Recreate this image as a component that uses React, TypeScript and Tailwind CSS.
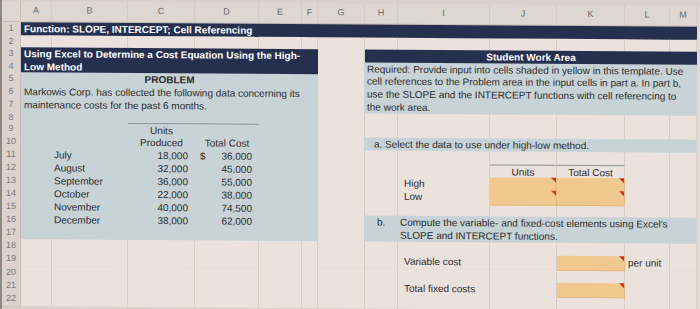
import React from 'react';

// column template: row header, A..M, trailing edge
const GRID =
  'grid grid-cols-[19px_31px_76px_67px_64px_43px_16px_47px_33px_92px_67px_68px_45px_27px_5px]';
const line = 'border-r border-b border-[#d9cdc8]';
const blank = `bg-[#ebe1dd] ${line}`;
const blue = 'bg-[#c8d3d7]';
const navy = 'bg-[#25304f] text-white font-bold text-[10px] leading-[13px] whitespace-nowrap';
const txt = 'text-[10px] leading-[13px] text-[#2b2b2b] whitespace-nowrap';

function Blank({ count = 1 }: { count?: number }) {
  return (
    <>
      {Array.from({ length: count }).map((_, i) => (
        <div key={i} className={blank} />
      ))}
    </>
  );
}

function Blue({ count = 1 }: { count?: number }) {
  return (
    <>
      {Array.from({ length: count }).map((_, i) => (
        <div key={i} className={blue} />
      ))}
    </>
  );
}

function Yellow() {
  return (
    <div className="relative bg-[#f1c990] border-r border-b border-[#e3b97f]">
      <span className="absolute right-0 top-0 w-0 h-0 border-l-[5px] border-l-transparent border-t-[5px] border-t-[#c23a26]" />
    </div>
  );
}

function Row({ n, h = 'h-[13px]', children }: { n: number; h?: string; children?: React.ReactNode }) {
  return (
    <div className={`${GRID} ${h}`}>
      <div className="flex items-center justify-center bg-[#ddd3ce] border-r border-b border-[#cbbfb9] text-[9px] text-[#7a7a7a]">
        {n}
      </div>
      {children}
      <div className="bg-[#e2d9d5]" />
    </div>
  );
}

function ProblemLine({ month, units, cost, dollar }: { month: string; units: string; cost: string; dollar?: boolean }) {
  return (
    <>
      <Blue />
      <div className={`${blue} ${txt} pl-[2px]`}>{month}</div>
      <div className={`${blue} ${txt} text-right pr-[7px]`}>{units}</div>
      <div className={`${blue} ${txt} flex justify-between pl-[5px] pr-[7px]`}>
        <span>{dollar ? '$' : ''}</span>
        <span>{cost}</span>
      </div>
      <Blue count={2} />
    </>
  );
}

const letters = ['A', 'B', 'C', 'D', 'E', 'F', 'G', 'H', 'I', 'J', 'K', 'L', 'M'];

export default function App() {
  return (
    <div className="w-[700px] h-[309px] overflow-hidden bg-[#d9d0cc] border-l-2 border-[#8f8883]">
      <div className="skew-y-[0.4deg] origin-top-left pt-[1px] font-['Liberation_Sans',Arial,sans-serif]">
        {/* column letters */}
        <div className={`${GRID} h-[21px] bg-[#ddd6d1] border-b border-[#c6bcb7]`}>
          <div className="border-r border-[#cbbfb9]" />
          {letters.map((l) => (
            <div key={l} className="flex items-center justify-center text-[9px] text-[#6a6a6a] border-r border-[#d4cbc6]">
              {l}
            </div>
          ))}
          <div />
        </div>

        <Row n={1}>
          <div className={`col-span-13 ${navy} pl-[3px]`}>Function: SLOPE, INTERCEPT; Cell Referencing</div>
        </Row>
        <Row n={2} h="h-[12px]">
          <Blank count={13} />
        </Row>
        <Row n={3}>
          <div className={`col-span-6 ${navy} pl-[3px]`}>Using Excel to Determine a Cost Equation Using the High-</div>
          <Blank />
          <div className={`col-span-6 ${navy} text-center`}>Student Work Area</div>
        </Row>
        <Row n={4} h="h-[12px]">
          <div className={`col-span-6 ${navy} leading-[12px] pl-[3px]`}>Low Method</div>
          <Blank />
          <div className={`col-span-6 ${blue} ${txt} leading-[12px] pl-[2px]`}>
            Required: Provide input into cells shaded in yellow in this template. Use
          </div>
        </Row>
        <Row n={5}>
          <div className={`col-span-6 ${blue} ${txt} font-bold text-center`}>PROBLEM</div>
          <Blank />
          <div className={`col-span-6 ${blue} ${txt} pl-[2px]`}>
            cell references to the Problem area in the input cells in part a. In part b,
          </div>
        </Row>
        <Row n={6}>
          <div className={`col-span-6 ${blue} ${txt} pl-[3px]`}>
            Markowis Corp. has collected the following data concerning its
          </div>
          <Blank />
          <div className={`col-span-6 ${blue} ${txt} pl-[2px]`}>
            use the SLOPE and the INTERCEPT functions with cell referencing to
          </div>
        </Row>
        <Row n={7}>
          <div className={`col-span-6 ${blue} ${txt} pl-[3px]`}>maintenance costs for the past 6 months.</div>
          <Blank />
          <div className={`col-span-6 ${blue} ${txt} pl-[2px] border-b border-[#8d9396]`}>the work area.</div>
        </Row>
        <Row n={8} h="h-[11px]">
          <Blue count={6} />
          <Blank count={7} />
        </Row>
        <Row n={9}>
          <Blue count={2} />
          <div className={`${blue} ${txt} text-center border-t border-[#8d9396]`}>Units</div>
          <div className={`${blue} border-t border-[#8d9396]`} />
          <Blue count={2} />
          <Blank count={7} />
        </Row>
        <Row n={10}>
          <Blue />
          <div className={`${blue} border-b border-[#8d9396]`} />
          <div className={`${blue} ${txt} text-center border-b border-[#8d9396]`}>Produced</div>
          <div className={`${blue} ${txt} text-center border-b border-[#8d9396]`}>Total Cost</div>
          <Blue count={2} />
          <Blank />
          <div className={`col-span-6 ${blue} ${txt} flex pl-[9px]`}>
            <span className="w-[11px]">a.</span>
            <span>Select the data to use under high-low method.</span>
          </div>
        </Row>
        <Row n={11}>
          <ProblemLine month="July" units="18,000" cost="36,000" dollar />
          <Blank count={7} />
        </Row>
        <Row n={12}>
          <ProblemLine month="August" units="32,000" cost="45,000" />
          <Blank count={3} />
          <div className={`${blank} ${txt} text-center border-t border-t-[#8d9396]`}>Units</div>
          <div className={`${blank} ${txt} text-center border-t border-t-[#8d9396]`}>Total Cost</div>
          <Blank count={2} />
        </Row>
        <Row n={13}>
          <ProblemLine month="September" units="36,000" cost="55,000" />
          <Blank count={2} />
          <div className={`${blank} ${txt} pl-[6px]`}>High</div>
          <Yellow />
          <Yellow />
          <Blank count={2} />
        </Row>
        <Row n={14}>
          <ProblemLine month="October" units="22,000" cost="38,000" />
          <Blank count={2} />
          <div className={`${blank} ${txt} pl-[6px]`}>Low</div>
          <Yellow />
          <Yellow />
          <Blank count={2} />
        </Row>
        <Row n={15}>
          <ProblemLine month="November" units="40,000" cost="74,500" />
          <Blank count={7} />
        </Row>
        <Row n={16}>
          <ProblemLine month="December" units="38,000" cost="62,000" />
          <Blank />
          <div className={`col-span-6 ${blue} ${txt} flex pl-[12px]`}>
            <span className="w-[23px]">b.</span>
            <span>Compute the variable- and fixed-cost elements using Excel&apos;s</span>
          </div>
        </Row>
        <Row n={17}>
          <Blue count={6} />
          <Blank />
          <div className={`col-span-6 ${blue} ${txt} pl-[35px]`}>SLOPE and INTERCEPT functions.</div>
        </Row>
        <Row n={18}>
          <Blank count={13} />
        </Row>
        <Row n={19} h="h-[14px]">
          <Blank count={8} />
          <div className={`${blank} ${txt} pl-[6px] leading-[14px]`}>Variable cost</div>
          <Blank />
          <Yellow />
          <div className={`${blank} ${txt} pl-[3px] leading-[14px]`}>per unit</div>
          <Blank />
        </Row>
        <Row n={20}>
          <Blank count={13} />
        </Row>
        <Row n={21}>
          <Blank count={8} />
          <div className={`${blank} ${txt} pl-[6px]`}>Total fixed costs</div>
          <Blank />
          <Yellow />
          <Blank count={2} />
        </Row>
        <Row n={22} h="h-[14px]">
          <Blank count={13} />
        </Row>
      </div>
    </div>
  );
}
